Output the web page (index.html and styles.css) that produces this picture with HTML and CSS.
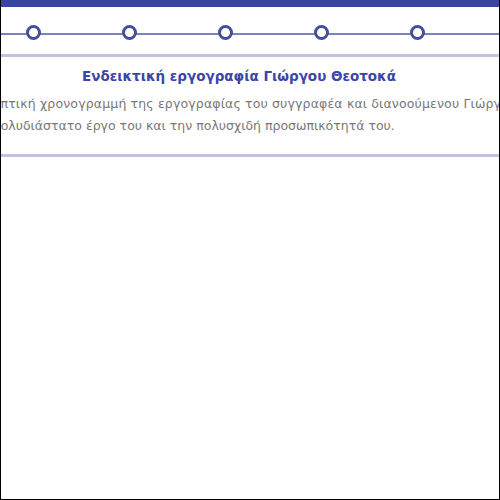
FILE: index.html
```html
<!DOCTYPE html>
<html lang="el">
<head>
<meta charset="utf-8">
<title>Ενδεικτική εργογραφία Γιώργου Θεοτοκά</title>
<link rel="stylesheet" href="styles.css">
</head>
<body>
<div class="frame">
  <div class="topbar"></div>
  <div class="timeline">
    <span class="dot"></span>
    <span class="dot"></span>
    <span class="dot"></span>
    <span class="dot"></span>
    <span class="dot"></span>
  </div>
  <section class="intro">
    <h1 class="title">Ενδεικτική εργογραφία Γιώργου Θεοτοκά</h1>
    <p class="lead"><span class="line-one">Εποπτική χρονογραμμή της εργογραφίας του συγγραφέα και διανοούμενου Γιώργου Θεοτοκά, που φωτίζει</span><br>το πολυδιάστατο έργο του και την πολυσχιδή προσωπικότητά του.</p>
  </section>
</div>
</body>
</html>
```

FILE: styles.css
```css
html, body {
  margin: 0;
  padding: 0;
  background: #ffffff;
}

.frame {
  box-sizing: border-box;
  width: 500px;
  height: 500px;
  border: 1px solid #000;
  border-top: 0;
  overflow: hidden;
  font-family: "DejaVu Sans", Verdana, sans-serif;
}

.topbar {
  height: 7px;
  background: #3a44a2;
}

.timeline {
  box-sizing: border-box;
  height: 50px;
  display: flex;
  align-items: center;
  gap: 81px;
  padding-left: 25px;
  padding-top: 4px;
  background: linear-gradient(#7c80c4, #7c80c4) 0 26px / 100% 2px no-repeat;
  border-bottom: 3px solid #c2c2e0;
}

.dot {
  box-sizing: border-box;
  width: 15px;
  height: 15px;
  border: 3px solid #474d9f;
  border-radius: 50%;
  background: #fff;
  flex: none;
}

.intro {
  border-bottom: 3px solid #c2c2e0;
  padding: 11px 0 17px;
  overflow: hidden;
}

.title {
  margin: 0 22px 0 0;
  text-align: center;
  font-size: 13.5px;
  font-weight: bold;
  color: #3a46a8;
  line-height: 16px;
}

.lead {
  margin: 9px 0 0 -27px;
  white-space: nowrap;
  font-size: 12.5px;
  line-height: 22px;
  color: #777777;
}

.line-one {
  display: inline-block;
  margin-left: 3px;
  letter-spacing: 0.15px;
}
```
